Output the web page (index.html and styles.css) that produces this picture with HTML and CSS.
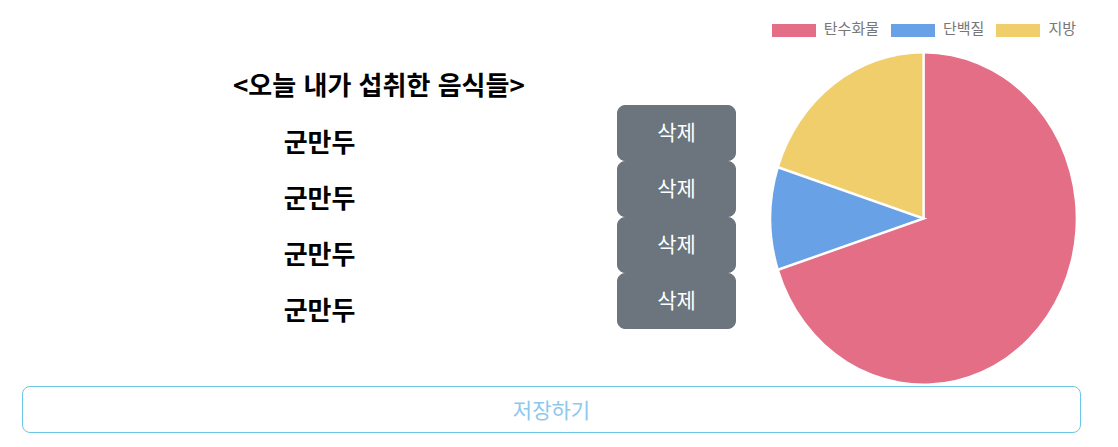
FILE: index.html
```html
<!DOCTYPE html>
<html lang="ko">
<head>
<meta charset="utf-8">
<meta name="viewport" content="width=device-width, initial-scale=1">
<title>오늘 내가 섭취한 음식들</title>
<link rel="stylesheet" href="styles.css">
</head>
<body>
<main class="page">
  <div class="summary">
    <section class="foods">
      <h1 class="foods-title">&lt;오늘 내가 섭취한 음식들&gt;</h1>
      <ul class="food-list">
        <li class="food"><span class="food-name">군만두</span><button class="btn btn-delete" type="button">삭제</button></li>
        <li class="food"><span class="food-name">군만두</span><button class="btn btn-delete" type="button">삭제</button></li>
        <li class="food"><span class="food-name">군만두</span><button class="btn btn-delete" type="button">삭제</button></li>
        <li class="food"><span class="food-name">군만두</span><button class="btn btn-delete" type="button">삭제</button></li>
      </ul>
    </section>
    <section class="chart">
      <ul class="legend">
        <li class="legend-item"><span class="swatch carbs"></span><span class="legend-label">탄수화물</span></li>
        <li class="legend-item"><span class="swatch protein"></span><span class="legend-label">단백질</span></li>
        <li class="legend-item"><span class="swatch fat"></span><span class="legend-label">지방</span></li>
      </ul>
      <svg class="pie" viewBox="0 0 305 334" preserveAspectRatio="none" aria-hidden="true">
        <path class="slice-carbs" d="M152.5 166.5V1.5A152 165 0 1 1 7.9 217.5Z"/>
        <path class="slice-protein" d="M152.5 166.5L7.9 217.5A152 165 0 0 1 7.9 115.5Z"/>
        <path class="slice-fat" d="M152.5 166.5L7.9 115.5A152 165 0 0 1 152.5 1.5Z"/>
        <path class="divider" d="M152.5 0V166.5M7 217.8L152.5 166.5L7 115.2"/>
      </svg>
    </section>
  </div>
  <button class="btn btn-save" type="button">저장하기</button>
</main>
</body>
</html>
```
FILE: styles.css
```css
* {
  box-sizing: border-box;
}

body {
  margin: 0;
  background: #fff;
  color: #000;
  font-family: "Noto Sans CJK KR", sans-serif;
}

.page {
  padding: 18px 37px 14px 22px;
}

.summary {
  display: grid;
  grid-template-columns: 714fr 345fr;
}

.foods {
  padding-top: 47px;
}

.foods-title {
  margin: 0 0 2px;
  font-size: 26px;
  line-height: 38px;
  font-weight: 700;
  text-align: center;
}

.food-list,
.legend {
  margin: 0;
  padding: 0;
  list-style: none;
}

.food {
  display: flex;
}

.food-name {
  flex: 1;
  padding-top: 17px;
  font-size: 26px;
  line-height: 38px;
  font-weight: 700;
  text-align: center;
}

.btn {
  border-radius: 8px;
  font-family: inherit;
  font-size: 21px;
  line-height: 30px;
  font-weight: 400;
  cursor: pointer;
}

.btn-delete {
  padding: 10px 39px 14px;
  border: 1px solid #6c757d;
  background: #6c757d;
  color: #fff;
}

.btn-save {
  display: block;
  width: 100%;
  padding: 7px 12px 8px;
  border: 1px solid #6ac7e8;
  background: transparent;
  color: #8cc8ee;
}

.chart {
  display: flex;
  flex-direction: column;
  gap: 10px;
  padding: 0 5px 0 35px;
}

.legend {
  display: flex;
  gap: 12px;
  padding-left: 1px;
  color: #777;
  font-size: 15px;
  line-height: 20px;
  white-space: nowrap;
}

.legend-item {
  display: flex;
  align-items: center;
  gap: 8px;
}

.legend-label {
  padding-bottom: 4px;
}

.swatch {
  width: 44px;
  height: 13px;
}

.carbs {
  background: #e46e85;
}

.protein {
  background: #68a1e5;
}

.fat {
  background: #f0ce6c;
}

.pie {
  display: block;
  width: 100%;
  height: 334px;
}

.slice-carbs {
  fill: #e46e85;
}

.slice-protein {
  fill: #68a1e5;
}

.slice-fat {
  fill: #f0ce6c;
}

.divider {
  fill: none;
  stroke: #fff;
  stroke-width: 2.5;
}
```
